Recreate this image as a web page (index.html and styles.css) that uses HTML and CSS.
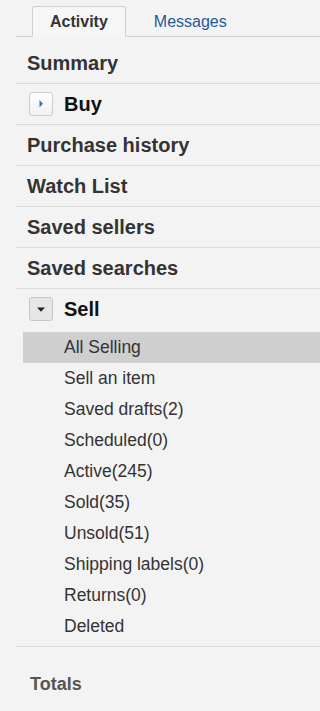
FILE: index.html
```html
<!DOCTYPE html>
<html lang="en">
<head>
<meta charset="utf-8">
<title>My eBay</title>
<link rel="stylesheet" href="styles.css">
</head>
<body>
<div class="tabbar">
  <div class="tab active">Activity</div>
  <div class="tab link">Messages</div>
</div>
<ul class="nav">
  <li class="row">Summary</li>
  <li class="row toggle"><span class="tbox"><svg width="24" height="24" viewBox="0 0 24 24"><path d="M10.5 8 L14 11.8 L10.5 15.6 Z" fill="#3275ba"/></svg></span><span class="tlabel">Buy</span></li>
  <li class="row">Purchase history</li>
  <li class="row">Watch List</li>
  <li class="row">Saved sellers</li>
  <li class="row">Saved searches</li>
  <li class="row toggle open"><span class="tbox pressed"><svg width="24" height="24" viewBox="0 0 24 24"><path d="M8 10.5 L16 10.5 L12 14.7 Z" fill="#222"/></svg></span><span class="tlabel">Sell</span></li>
</ul>
<ul class="sub">
  <li class="sel">All Selling</li>
  <li>Sell an item</li>
  <li>Saved drafts(2)</li>
  <li>Scheduled(0)</li>
  <li>Active(245)</li>
  <li>Sold(35)</li>
  <li>Unsold(51)</li>
  <li>Shipping labels(0)</li>
  <li>Returns(0)</li>
  <li>Deleted</li>
</ul>
<div class="totals">Totals</div>
</body>
</html>
```
FILE: styles.css
```css
html, body {
  margin: 0;
  padding: 0;
  background: #f3f3f3;
  font-family: "Liberation Sans", Arial, sans-serif;
}
.tabbar {
  display: flex;
  margin-left: 16px;
  padding: 6px 0 0 16px;
  border-bottom: 1px solid #cfcfcf;
}
.tab {
  font-size: 16px;
  line-height: 29px;
  padding: 0 17px;
  border: 1px solid transparent;
  margin-bottom: -1px;
}
.tab.active {
  font-weight: bold;
  color: #333;
  background: #f6f6f6;
  border-color: #cfcfcf;
  border-bottom-color: #f6f6f6;
  border-radius: 3px 3px 0 0;
}
.tab.link {
  color: #245a96;
  margin-left: 10px;
}
.nav, .sub {
  list-style: none;
  margin: 0;
  padding: 0;
}
.nav {
  margin: 6px 0 0 16px;
}
.row {
  height: 40px;
  line-height: 40px;
  padding-left: 11px;
  font-size: 20px;
  font-weight: bold;
  color: #333;
  border-bottom: 1px solid #dcdcdc;
}
.row.toggle {
  display: flex;
  align-items: center;
  padding-left: 13px;
  color: #111;
}
.row.open {
  border-bottom: 0;
}
.tbox {
  width: 22px;
  height: 22px;
  border: 1px solid #cdcdcd;
  border-radius: 3px;
  background: linear-gradient(#ffffff, #f1f1f1);
  display: flex;
  align-items: center;
  justify-content: center;
  overflow: hidden;
}
.tbox svg {
  flex: none;
}
.tbox.pressed {
  background: #e6e6e6;
  border-color: #c6c6c6;
}
.tlabel {
  margin-left: 11px;
}
.sub {
  margin: 3px 0 0 23px;
  padding-bottom: 4px;
}
.sub li {
  height: 31px;
  line-height: 31px;
  padding-left: 41px;
  font-size: 17.5px;
  color: #333;
}
.sub li.sel {
  background: #cfcfcf;
}
.totals {
  margin-left: 16px;
  border-top: 1px solid #dcdcdc;
  padding: 22px 0 0 14px;
  font-size: 18px;
  line-height: 30px;
  font-weight: bold;
  color: #555;
}
```
